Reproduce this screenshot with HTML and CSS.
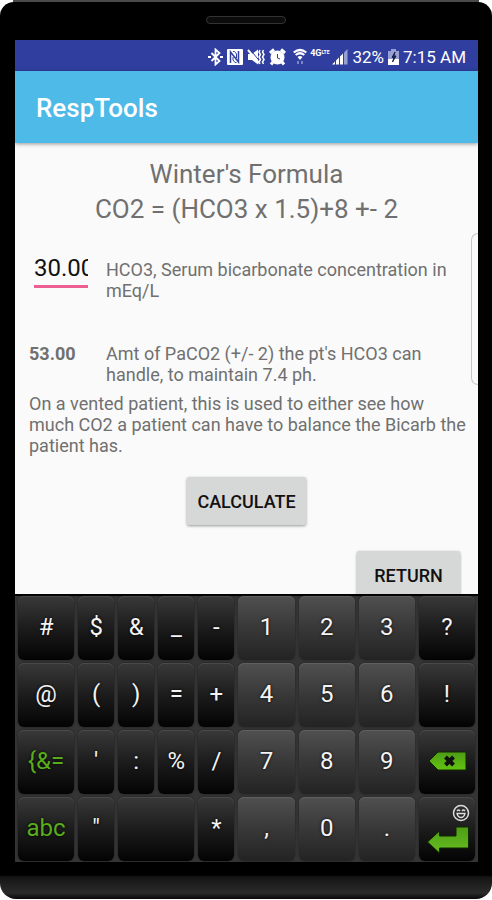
FILE: index.html
```html
<!DOCTYPE html>
<html lang="en">
<head>
<meta charset="utf-8">
<meta name="viewport" content="width=device-width, initial-scale=1">
<title>RespTools</title>
<link rel="stylesheet" href="styles.css">
</head>
<body>
<div class="phone">
  <div class="bezel-top"><div class="speaker"></div></div>
  <div class="screen">
    <div class="status">
      <svg class="icon" width="15" height="18" viewBox="0 0 15 18"><path d="M3.500 5l8 8-4 3.500v-15l4 3.500-8 8" fill="none" stroke="#fff" stroke-width="1.800"/><path d="M0 9h3M12 9h3" stroke="#fff" stroke-width="2"/></svg>
      <svg class="icon nfc" width="16" height="18" viewBox="0 0 16 18"><rect y="1" width="16" height="16" rx="1" fill="#fff"/><path d="M3.500 15V4l8 10V3" fill="none" stroke="#303f9f" stroke-width="1.500"/><path d="M6 3.500h1.500l2 2.500v4M9.500 14.500H8L6 12V9" fill="none" stroke="#303f9f" stroke-width="1"/></svg>
      <svg class="icon mute" width="18" height="18" viewBox="0 0 18 18"><path d="M1 6h4l6-4.500v15L5 12H1z" fill="#fff"/><path d="M3 1.500l10 12" stroke="#303f9f" stroke-width="1"/><path d="M1 2l11 13" stroke="#fff" stroke-width="2"/><path d="M13 2l-1 2 1.500 2.500L12 9l1.500 2.500L12 14l1 2M16.500 2l-1 2 1.500 2.500L15.500 9l1.500 2.500-1.500 2.500 1 2" fill="none" stroke="#fff" stroke-width="1.500"/></svg>
      <svg class="icon alarm" width="17" height="18" viewBox="0 0 17 18"><circle cx="8.500" cy="9.500" r="7" fill="#fff"/><path d="M1 5l4-3.500M16 5l-4-3.500M4 14l-2 2.500M13 14l2 2.500" stroke="#fff" stroke-width="3"/><path d="M8.500 6v4l2.500 1" fill="none" stroke="#303f9f" stroke-width="1"/></svg>
      <svg class="icon wifi" width="14" height="18" viewBox="0 0 14 18"><path d="M0.700 4.500q6.300-5 12.600 0M2.700 7q4.300-3.500 8.600 0" fill="none" stroke="#fff" stroke-width="2.200"/><path d="M4.500 9q2.500-2 5 0L7 12z" fill="#fff"/><path d="M5 13v3M9 13v3" stroke="#98a0d3" stroke-width="1.500"/></svg>
      <span class="network"><span>4G</span><span class="lte">LTE</span></span>
      <svg class="icon signal" width="16" height="18" viewBox="0 0 16 18"><path d="M0 16.500l3-3v3zM4 12.500l3-3v7H4zM8 8.500l3-3v11H8z" fill="#fff"/><path d="M12 4.500L15.500 1v15.500H12z" fill="#98a0d3"/></svg>
      <span class="battery-text">32%</span>
      <svg class="icon battery" width="11" height="18" viewBox="0 0 11 18"><path d="M3 1h5v2h3v8H0V3h3z" fill="#98a0d3"/><path d="M0 11h11v6H0z" fill="#fff"/><path d="M7 4L4 9.500h2L4.500 14l3.500-6H6z" fill="#17204f" stroke="#17204f"/></svg>
      <span>7:15 AM</span>
    </div>
    <header class="appbar"><h1>RespTools</h1></header>
    <main class="content">
      <h2 class="title">Winter's Formula<br>CO2 = (HCO3 x 1.5)+8 +- 2</h2>
      <div class="row entry">
        <input id="hco3" class="value" type="text" inputmode="decimal" value="30.00">
        <label for="hco3">HCO3, Serum bicarbonate concentration in mEq/L</label>
      </div>
      <div class="row">
        <output class="result">53.00</output>
        <p>Amt of PaCO2 (+/- 2) the pt's HCO3 can handle, to maintain 7.4 ph.</p>
      </div>
      <p class="note">On a vented patient, this is used to either see how much CO2 a patient can have to balance the Bicarb the patient has.</p>
      <button class="btn calculate" type="button">CALCULATE</button>
      <button class="btn return" type="button">RETURN</button>
      <div class="edge-handle"></div>
    </main>
    <div class="keyboard">
      <button class="key wide">#</button><button class="key">$</button><button class="key">&amp;</button><button class="key">_</button><button class="key">-</button><button class="key wide num">1</button><button class="key wide num">2</button><button class="key wide num">3</button><button class="key wide">?</button>
      <button class="key wide">@</button><button class="key">(</button><button class="key">)</button><button class="key">=</button><button class="key">+</button><button class="key wide num">4</button><button class="key wide num">5</button><button class="key wide num">6</button><button class="key wide">!</button>
      <button class="key wide green">{&amp;=</button><button class="key">'</button><button class="key">:</button><button class="key">%</button><button class="key">/</button><button class="key wide num">7</button><button class="key wide num">8</button><button class="key wide num">9</button>
      <button class="key wide" aria-label="Backspace"><svg width="40" height="22" viewBox="0 0 40 22"><defs><linearGradient id="g" x2="0" y2="1"><stop stop-color="#4e9c16"/><stop offset="1" stop-color="#62c411"/></linearGradient></defs><path d="M2 11l9-9h28v18H11z" fill="url(#g)" stroke="#102800" stroke-width="1"/><path d="M18.500 7l8 8M26.500 7l-8 8" stroke="#111" stroke-width="4"/></svg></button>
      <button class="key wide green">abc</button><button class="key">"</button><button class="key space" aria-label="Space"></button><button class="key">*</button><button class="key wide num">,</button><button class="key wide num">0</button><button class="key wide num">.</button>
      <button class="key wide" aria-label="Enter"><svg width="46" height="54" viewBox="0 0 46 54"><defs><linearGradient id="e" x2="0" y2="1"><stop stop-color="#4e9c16"/><stop offset="1" stop-color="#66bd20"/></linearGradient></defs><circle cx="37" cy="12" r="7.500" fill="none" stroke="#ddd" stroke-width="1.500"/><path d="M33 10q1.500-2 3 0M38 10q1.500-2 3 0M33 12.500h8q-1 4-4 4t-4-4z" fill="none" stroke="#ddd" stroke-width="1.300"/><path d="M3.500 41l12-11v5H32v-9h12.500v21H15.500v5z" fill="url(#e)" stroke="#102800" stroke-width="1"/></svg></button>
    </div>
  </div>
  <div class="bezel-bottom"></div>
</div>
</body>
</html>
```
FILE: styles.css
```css
* { box-sizing: border-box; }
body {
  margin: 0;
  background: #fff;
  font-family: Roboto, "Liberation Sans", sans-serif;
}
h1, h2, p { margin: 0; font-weight: 400; }
button, input { font-family: inherit; border: 0; padding: 0; }

.phone {
  height: 100vh;
  display: flex;
  flex-direction: column;
  background: linear-gradient(#4a4a4a, #4a4a4a) 50% 0 / calc(100% - 26px) 8px no-repeat;
  padding: 2px 0 1px;
}
.bezel-top {
  flex: none;
  height: 38px;
  display: flex;
  justify-content: center;
  padding-top: 14px;
  background: #000;
  border-radius: 14px 14px 0 0;
}
.speaker {
  width: 80px;
  height: 8px;
  border: 1px solid #333;
  border-radius: 4px;
  background: #0c0c0c;
}
.screen {
  flex: 1;
  min-height: 0;
  display: flex;
  flex-direction: column;
  border: solid #000;
  border-width: 0 14px 0 15px;
}
.bezel-bottom {
  flex: none;
  height: 37px;
  background: linear-gradient(#000 13px, #151515 15px, #2b2b2b 31px, #080808);
  border-radius: 0 0 16px 16px;
}

.status {
  flex: none;
  height: 31px;
  display: flex;
  align-items: center;
  justify-content: flex-end;
  padding: 2px 12px 0 0;
  background: #303f9f;
  color: #fff;
  font-size: 17px;
  white-space: nowrap;
}
.icon { flex: none; }
.nfc, .mute, .alarm { margin-left: 4px; }
.wifi { margin-left: 7px; }
.network {
  display: flex;
  align-items: flex-start;
  height: 18px;
  margin: 0 2px 0 3px;
  font-size: 9px;
  line-height: 11px;
  font-weight: 700;
}
.lte { font-size: 5px; line-height: 9px; }
.battery-text { margin-left: 5px; }
.battery { margin: 0 4px; }

.appbar {
  flex: none;
  position: relative;
  z-index: 1;
  height: 72px;
  display: flex;
  align-items: center;
  padding: 2px 21px 0;
  background: #4dbae8;
  box-shadow: 0 1px 4px rgba(0, 0, 0, .4);
  color: #fff;
}
.appbar h1 { font-size: 26px; font-weight: 500; }

.content {
  position: relative;
  flex: 1;
  min-height: 0;
  overflow: hidden;
  display: flex;
  flex-direction: column;
  padding: 14px 14px 0;
  background: #fafafa;
  color: #707070;
  font-size: 18px;
  line-height: 21px;
}
.title {
  text-align: center;
  font-size: 26px;
  line-height: 35px;
}
.row {
  display: grid;
  grid-template-columns: 61px 1fr;
  column-gap: 16px;
}
.entry { margin: 25px 0 42px; align-items: end; }
.value {
  width: 54px;
  height: 36px;
  margin: 0 0 13px 5px;
  padding-bottom: 1px;
  border-bottom: 3px solid #ec5f92;
  background: transparent;
  color: #111;
  font-size: 24px;
  outline: 0;
}
.result { font-weight: 700; }
.note { margin: 8px -6px 21px 0; }
.btn {
  flex: none;
  height: 48px;
  border-radius: 2px;
  background: #d6d7d7;
  box-shadow: 0 1px 3px rgba(0, 0, 0, .4);
  color: #111;
  font-size: 18px;
  font-weight: 500;
}
.calculate { align-self: center; width: 119px; }
.return { align-self: flex-end; width: 103px; margin: 26px 4px 0; }
.edge-handle {
  position: absolute;
  right: 0;
  top: 90px;
  width: 7px;
  height: 152px;
  border: 1px solid #c6c6c6;
  border-right: 0;
  border-radius: 7px 0 0 7px;
}

.keyboard {
  flex: none;
  display: grid;
  grid-template-columns: repeat(23, 1fr);
  grid-auto-rows: 64px;
  row-gap: 3px;
  border-top: 2px solid #000;
  padding: 0 1px 1px;
  background: #353535;
}
.key {
  grid-column: span 2;
  display: flex;
  align-items: center;
  justify-content: center;
  min-width: 0;
  margin: 0 2px;
  padding-bottom: 2px;
  border-radius: 6px;
  background: linear-gradient(#393939, #1c1c1c 50%, #030303);
  box-shadow: inset 0 1px #4a4a4a, 0 0 2px #161616;
  color: #f4f4f4;
  font-size: 24px;
  text-shadow: 0 0 3px #000;
}
.wide { grid-column: span 3; }
.space { grid-column: span 4; }
.num {
  background: linear-gradient(#505050, #383838 50%, #232323);
  box-shadow: inset 0 1px #606060, 0 0 2px #1c1c1c;
}
.green { color: #5aad1a; }
```
